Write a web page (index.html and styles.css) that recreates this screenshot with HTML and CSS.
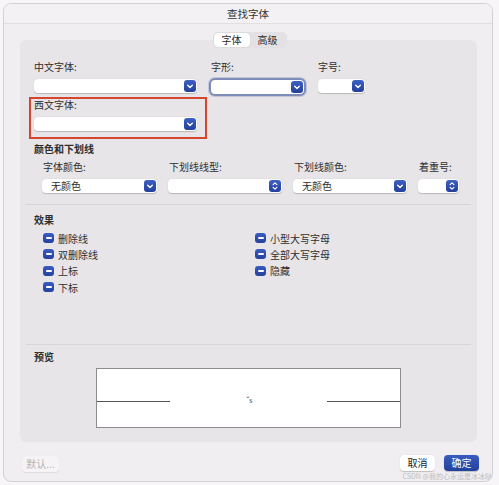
FILE: index.html
```html
<!DOCTYPE html>
<html lang="zh">
<head>
<meta charset="utf-8">
<link rel="stylesheet" href="styles.css">
</head>
<body>
<div class="window">
  <div class="titlebar">查找字体</div>
  <div class="tabs">
    <div class="seg">
      <span class="tab active">字体</span>
      <span class="tab">高级</span>
    </div>
  </div>
  <div class="group">
    <div class="row1">
      <div class="field f-cn">
        <div class="lbl">中文字体:</div>
        <div class="popup"><span class="btn"><svg viewBox="0 0 11 12"><path d="M3.2 5.2 L5.5 7.4 L7.8 5.2" fill="none" stroke="#fff" stroke-width="1.4" stroke-linecap="round" stroke-linejoin="round"/></svg></span></div>
      </div>
      <div class="field f-style">
        <div class="lbl">字形:</div>
        <div class="popup focus"><span class="btn"><svg viewBox="0 0 11 12"><path d="M3.2 5.2 L5.5 7.4 L7.8 5.2" fill="none" stroke="#fff" stroke-width="1.4" stroke-linecap="round" stroke-linejoin="round"/></svg></span></div>
      </div>
      <div class="field f-size">
        <div class="lbl">字号:</div>
        <div class="popup"><span class="btn"><svg viewBox="0 0 11 12"><path d="M3.2 5.2 L5.5 7.4 L7.8 5.2" fill="none" stroke="#fff" stroke-width="1.4" stroke-linecap="round" stroke-linejoin="round"/></svg></span></div>
      </div>
    </div>
    <div class="redbox">
      <div class="lbl">西文字体:</div>
      <div class="popup"><span class="btn"><svg viewBox="0 0 11 12"><path d="M3.2 5.2 L5.5 7.4 L7.8 5.2" fill="none" stroke="#fff" stroke-width="1.4" stroke-linecap="round" stroke-linejoin="round"/></svg></span></div>
    </div>

    <div class="heading h-color">颜色和下划线</div>
    <div class="row2">
      <div class="lbl">字体颜色:</div>
      <div class="lbl">下划线线型:</div>
      <div class="lbl">下划线颜色:</div>
      <div class="lbl">着重号:</div>
      <div class="popup"><span class="val">无颜色</span><span class="btn"><svg viewBox="0 0 11 12"><path d="M3.2 5.2 L5.5 7.4 L7.8 5.2" fill="none" stroke="#fff" stroke-width="1.4" stroke-linecap="round" stroke-linejoin="round"/></svg></span></div>
      <div class="popup"><span class="btn"><svg viewBox="0 0 11 12"><path d="M3.6 4.6 L5.5 2.9 L7.4 4.6 M3.6 7.4 L5.5 9.1 L7.4 7.4" fill="none" stroke="#fff" stroke-width="1.2" stroke-linecap="round" stroke-linejoin="round"/></svg></span></div>
      <div class="popup"><span class="val">无颜色</span><span class="btn"><svg viewBox="0 0 11 12"><path d="M3.2 5.2 L5.5 7.4 L7.8 5.2" fill="none" stroke="#fff" stroke-width="1.4" stroke-linecap="round" stroke-linejoin="round"/></svg></span></div>
      <div class="popup"><span class="btn"><svg viewBox="0 0 11 12"><path d="M3.6 4.6 L5.5 2.9 L7.4 4.6 M3.6 7.4 L5.5 9.1 L7.4 7.4" fill="none" stroke="#fff" stroke-width="1.2" stroke-linecap="round" stroke-linejoin="round"/></svg></span></div>
    </div>

    <div class="divider d1"></div>

    <div class="heading h-effect">效果</div>
    <div class="effects">
      <div class="col">
        <div class="check"><span class="box"></span>删除线</div>
        <div class="check"><span class="box"></span>双删除线</div>
        <div class="check"><span class="box"></span>上标</div>
        <div class="check"><span class="box"></span>下标</div>
      </div>
      <div class="col col-r">
        <div class="check"><span class="box"></span>小型大写字母</div>
        <div class="check"><span class="box"></span>全部大写字母</div>
        <div class="check"><span class="box"></span>隐藏</div>
      </div>
    </div>

    <div class="divider d2"></div>

    <div class="heading h-preview">预览</div>
    <div class="preview">
      <span class="line"></span>
      <span class="sample">ˇs</span>
      <span class="line"></span>
    </div>
  </div>

  <div class="footer">
    <span class="button disabled">默认...</span>
    <span class="spacer"></span>
    <span class="button">取消</span>
    <span class="button primary">确定</span>
  </div>
  <div class="watermark">CSDN @我的心永远是冰冰哒</div>
</div>
</body>
</html>
```
FILE: styles.css
```css
* { box-sizing: border-box; }
html, body { margin: 0; padding: 0; }
body {
  background: #f7f5f7;
  font-family: "Noto Sans CJK SC", "Noto Sans", sans-serif;
  color: #2e2e2e;
  font-size: 10px;
  width: 499px;
  height: 485px;
  overflow: hidden;
}
.window {
  position: relative;
  margin: 3px 0 0 3px;
  width: 490px;
  height: 479px;
  background: #f0eef0;
  border: 1px solid #d3d1d4;
  border-radius: 8px;
  overflow: hidden;
}
.titlebar {
  height: 20px;
  line-height: 19px;
  text-align: center;
  font-size: 10.5px;
  color: #333;
  background: #f4f1f4;
  border-bottom: 1px solid #e2dfe2;
}
.tabs {
  display: flex;
  justify-content: center;
  margin-top: 8px;
  margin-bottom: -8px;
  position: relative;
  z-index: 1;
  padding-right: 6px;
}
.seg {
  display: flex;
  height: 16px;
  background: #e3e1e4;
  border-radius: 5px;
  padding: 1px;
  margin-left: 9px;
}
.tab {
  display: block;
  width: 36px;
  line-height: 14px;
  text-align: center;
  font-size: 10px;
  color: #2b2b2b;
  border-radius: 4px;
}
.tab.active {
  background: #fff;
  box-shadow: 0 0 1px rgba(0,0,0,0.25);
}
.group {
  margin-left: 16px;
  width: 457px;
  height: 402px;
  background: #e7e5e8;
  border-radius: 6px;
  padding: 21px 14px 0;
}
.field { flex: none; }
.lbl, .heading {
  line-height: 12px;
  height: 12px;
  font-size: 10px;
  white-space: nowrap;
}
.heading { font-weight: bold; }
.popup {
  position: relative;
  height: 14px;
  margin-top: 6px;
  background: #fff;
  border-radius: 4px;
  box-shadow: 0 0.5px 1px rgba(0,0,0,0.2);
  display: flex;
  align-items: center;
  min-width: 0;
}
.popup .val {
  padding-left: 9px;
  font-size: 10px;
  line-height: 14px;
  flex: 1;
}
.popup .btn {
  position: absolute;
  right: 1px;
  top: 1px;
  width: 12px;
  height: 12px;
  border-radius: 3px;
  background: linear-gradient(#3d60c4, #23409b);
  display: block;
}
.popup .btn svg { display: block; width: 12px; height: 12px; }
.popup.focus {
  box-shadow: 0 0 0 2px #7d8cb8, 0 0 0 3px rgba(125,140,184,0.35);
}
.row1 { display: flex; }
.f-cn { width: 163px; }
.f-style { width: 93px; margin-left: 14px; }
.f-style .popup { margin-top: 7px; }
.f-size { width: 47px; margin-left: 14px; }
.redbox {
  margin-top: 3px;
  margin-left: -5px;
  width: 178px;
  height: 42px;
  border: 2px solid #d8452f;
  padding: 0 8px 0 3px;
}
.h-color { margin-top: 4px; }
.row2 {
  display: grid;
  grid-template-columns: 115px 114px 114px 41px;
  column-gap: 11px;
  margin: 6px 0 0 8px;
  width: 417px;
}
.row2 .lbl { padding-left: 1px; }
.divider {
  height: 1px;
  background: #d7d5d8;
  margin-left: -8px;
  margin-right: -8px;
}
.d1 { margin-top: 11px; }
.h-effect { margin-top: 9px; }
.effects { display: flex; margin-top: 4px; height: 64px; }
.col { width: 212px; padding-left: 9px; flex: none; }
.check {
  display: flex;
  align-items: center;
  height: 16.3px;
  font-size: 10px;
  white-space: nowrap;
}
.box {
  position: relative;
  flex: none;
  width: 11px;
  height: 10px;
  border-radius: 3px;
  background: linear-gradient(#3a5cc0, #24419c);
  margin-right: 4px;
  display: block;
}
.box::after {
  content: "";
  position: absolute;
  left: 2.5px;
  top: 4px;
  width: 6px;
  height: 2px;
  background: #fff;
  border-radius: 1px;
}
.d2 { margin-top: 50px; }
.h-preview { margin-top: 6px; }
.preview {
  margin: 5px 0 0 62px;
  width: 305px;
  height: 60px;
  background: #fff;
  border: 1px solid #8d8b8e;
  display: flex;
  align-items: center;
  padding-top: 5px;
}
.preview .line {
  display: block;
  flex: none;
  width: 73px;
  height: 1px;
  background: #555;
  margin-top: 2px;
}
.preview .sample {
  flex: 1;
  text-align: center;
  font-family: "Liberation Serif", serif;
  font-size: 8px;
  color: #444;
  padding-left: 2px;
}
.footer {
  display: flex;
  align-items: center;
  margin-top: 11px;
  padding: 0 13px 0 18px;
}
.spacer { flex: 1; }
.button {
  display: block;
  flex: none;
  height: 16px;
  line-height: 16px;
  padding: 0;
  width: 35px;
  text-align: center;
  font-size: 10px;
  background: #fff;
  border-radius: 4px;
  box-shadow: 0 0.5px 1px rgba(0,0,0,0.2);
  color: #222;
}
.button.disabled {
  width: 37px;
  color: #b4b2b5;
  background: #f5f3f5;
  margin-top: 3px;
  box-shadow: 0 0.5px 1px rgba(0,0,0,0.08);
}
.button.primary {
  margin-left: 9px;
  background: linear-gradient(#3a5cc0, #23419b);
  color: #fff;
}
.watermark {
  position: absolute;
  right: 0;
  bottom: 0;
  font-size: 7px;
  line-height: 9px;
  color: #bdbbbe;
  white-space: nowrap;
}
```
